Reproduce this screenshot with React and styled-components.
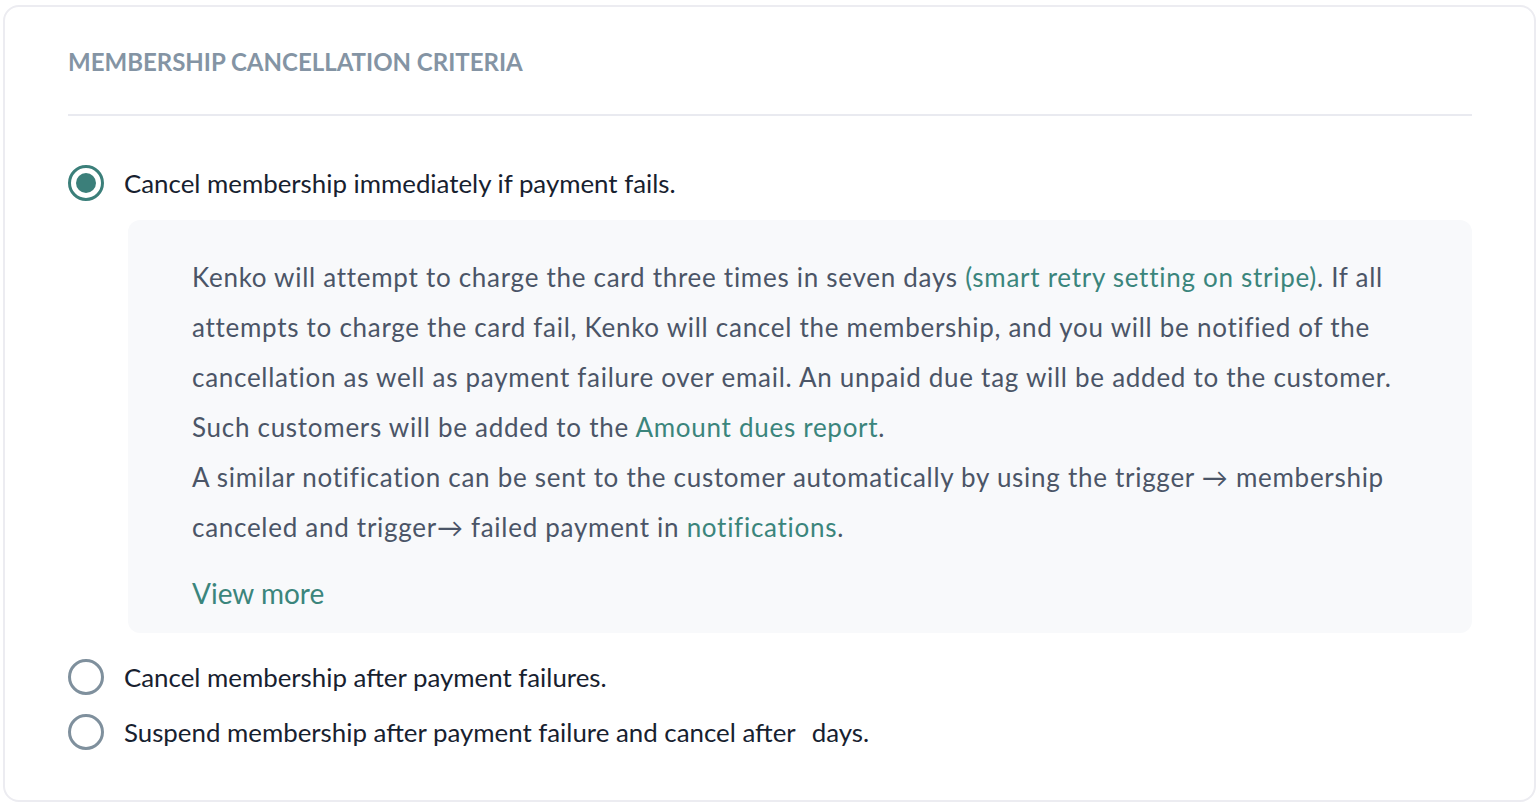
import React from 'react';
import styled, { createGlobalStyle } from 'styled-components';

const GlobalStyle = createGlobalStyle`
  html, body {
    margin: 0;
    padding: 0;
    background: #ffffff;
  }
  body {
    font-family: Lato, "Noto Sans", "Liberation Sans", sans-serif;
    -webkit-font-smoothing: antialiased;
  }
`;

const options = [
  { id: 'immediate', label: 'Cancel membership immediately if payment fails.' },
  { id: 'after', label: 'Cancel membership after payment failures.' },
  { id: 'suspend', label: 'Suspend membership after payment failure and cancel after', suffix: 'days.' },
];

const App = () => {
  const selected = 'immediate';

  return (
    <>
      <GlobalStyle />
      <Card>
        <Title>Membership cancellation criteria</Title>
        <Divider />

        <OptionList>
          {options.map((opt) => (
            <React.Fragment key={opt.id}>
              <OptionRow>
                <Radio $checked={opt.id === selected} />
                <OptionLabel>
                  {opt.label}
                  {opt.suffix && (
                    <>
                      <DaysInput />
                      {opt.suffix}
                    </>
                  )}
                </OptionLabel>
              </OptionRow>

              {opt.id === selected && (
                <InfoBox>
                  <InfoText>
                    Kenko will attempt to charge the card three times in seven days{' '}
                    <Link>(smart retry setting on stripe)</Link>. If all attempts to charge the card
                    fail, Kenko will cancel the membership, and you will be notified of the
                    cancellation as well as payment failure over email. An unpaid due tag will be
                    added to the customer. Such customers will be added to the{' '}
                    <Link>Amount dues report</Link>.
                  </InfoText>
                  <InfoText>
                    A similar notification can be sent to the customer automatically by using the
                    trigger → membership canceled and trigger→ failed payment in{' '}
                    <Link>notifications</Link>.
                  </InfoText>
                  <ViewMore>View more</ViewMore>
                </InfoBox>
              )}
            </React.Fragment>
          ))}
        </OptionList>
      </Card>
    </>
  );
};

const Card = styled.div`
  box-sizing: border-box;
  margin: 5px 0 0 3px;
  width: calc(100% - 3px);
  height: 797px;
  border: 2px solid #ececf1;
  border-radius: 16px;
  padding: 41px 62px 0 63px;
  background: #ffffff;
  overflow: hidden;
`;

const Title = styled.h2`
  margin: 0;
  font-size: 24px;
  line-height: 28px;
  font-weight: 700;
  text-transform: uppercase;
  color: #8494a4;
  letter-spacing: 0;
`;

const Divider = styled.div`
  height: 2px;
  background: #e9eaf0;
  margin-top: 38px;
`;

const OptionList = styled.div`
  display: flex;
  flex-direction: column;
  margin-top: 49px;
`;

const OptionRow = styled.div`
  display: flex;
  align-items: center;
  gap: 20px;
  height: 36px;
  & + & {
    margin-top: 19px;
  }
`;

const Radio = styled.span`
  position: relative;
  box-sizing: border-box;
  flex: none;
  width: 36px;
  height: 36px;
  border-radius: 50%;
  border: 3.5px solid ${(p) => (p.$checked ? '#3b7f7a' : '#7f909d')};

  &::before {
    content: '';
    display: ${(p) => (p.$checked ? 'block' : 'none')};
    position: absolute;
    left: 50%;
    top: 50%;
    width: 80px;
    height: 80px;
    border-radius: 50%;
    background: #f5f6f9;
    transform: translate(-50%, -50%);
    z-index: -1;
  }

  &::after {
    content: '';
    display: ${(p) => (p.$checked ? 'block' : 'none')};
    position: absolute;
    left: 50%;
    top: 50%;
    width: 20px;
    height: 20px;
    border-radius: 50%;
    background: #3b7f7a;
    transform: translate(-50%, -50%);
  }
`;

const OptionLabel = styled.span`
  font-size: 25.85px;
  line-height: 30px;
  color: #17212f;
`;

const DaysInput = styled.span`
  display: inline-block;
  width: 16px;
`;

const InfoBox = styled.div`
  position: relative;
  margin: 19px 0 26px 60px;
  padding: 32px 64px 22px 64px;
  background: #f8f9fb;
  border-radius: 12px;
`;

const InfoText = styled.p`
  margin: 0;
  font-size: 26px;
  letter-spacing: 0.72px;
  line-height: 50px;
  color: #4b5567;
`;

const Link = styled.span`
  color: #3b857c;
  cursor: pointer;
`;

const ViewMore = styled.div`
  margin-top: 23px;
  font-size: 28px;
  line-height: 36px;
  color: #3b857c;
  cursor: pointer;
`;

export default App;
